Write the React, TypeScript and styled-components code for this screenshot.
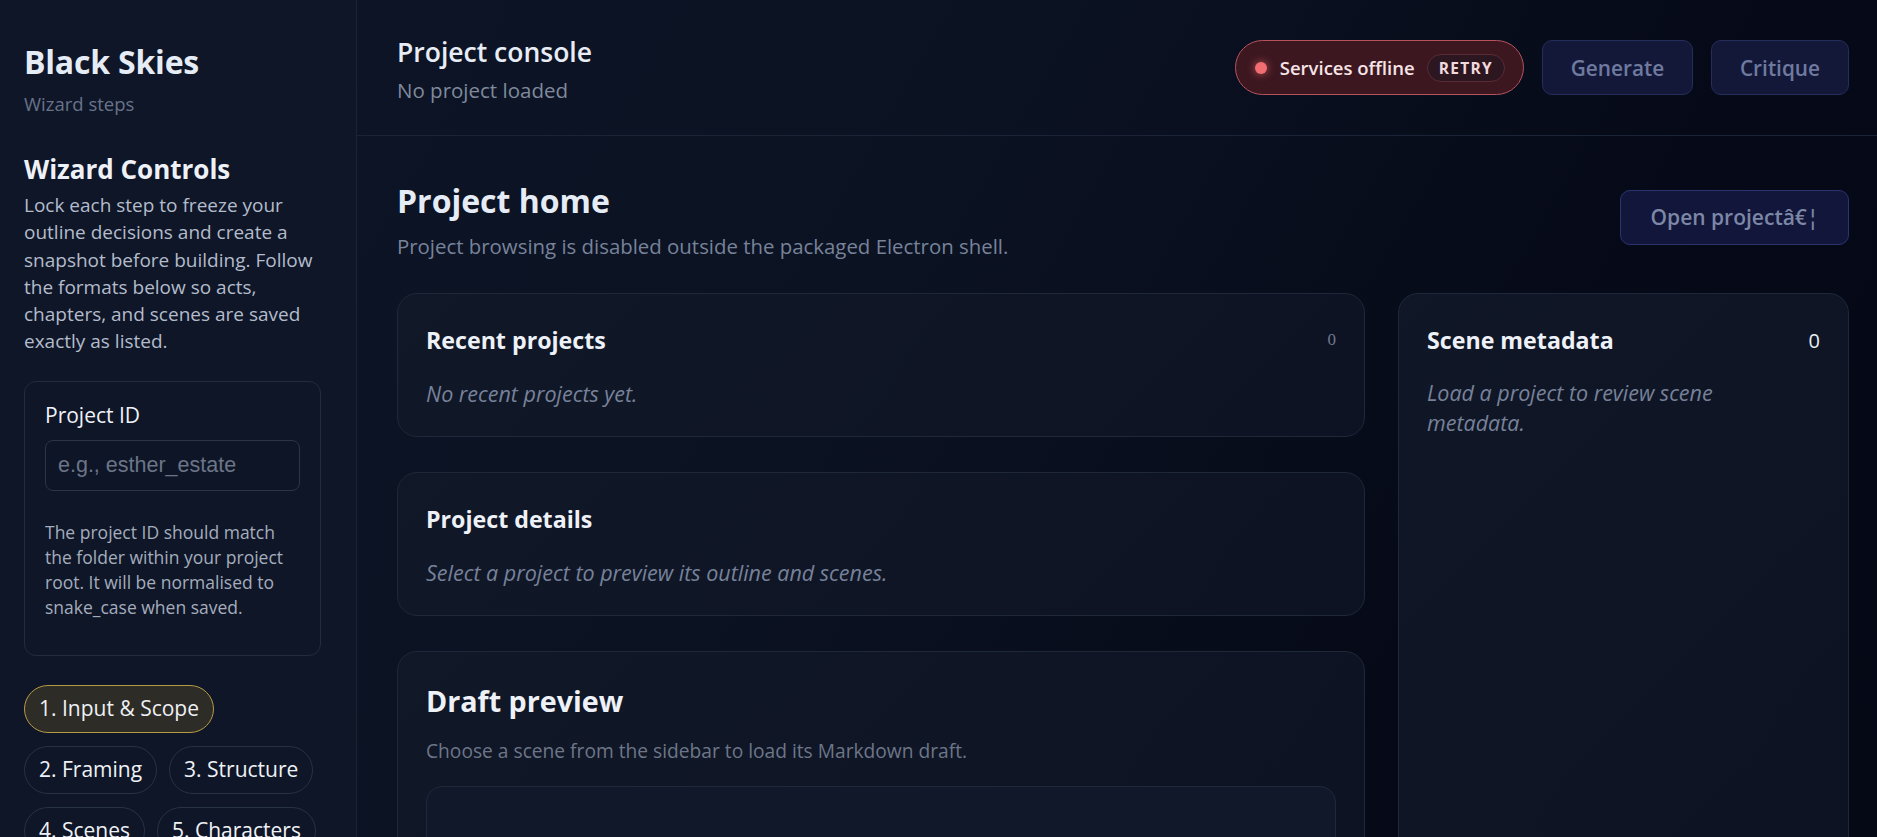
import React from "react";
import styled, { createGlobalStyle } from "styled-components";

const GlobalStyle = createGlobalStyle`
  html, body {
    margin: 0;
    padding: 0;
    height: 100%;
    background: #0a1020;
    font-family: "Open Sans", "Noto Sans", sans-serif;
    color: #e5e9f2;
  }
  #root {
    height: 100%;
  }
  * {
    box-sizing: border-box;
  }
`;

const Shell = styled.div`
  display: flex;
  height: 100vh;
  overflow: hidden;
  background: linear-gradient(120deg, #0e1527 0%, #0b1222 45%, #060a18 75%, #050815 100%);
`;

const Sidebar = styled.aside`
  width: 357px;
  flex-shrink: 0;
  padding: 42px 35px 0 24px;
  background: #0f1628;
  border-right: 1px solid #1b2436;
  display: flex;
  flex-direction: column;
`;

const Brand = styled.h1`
  margin: 0;
  font-size: 32px;
  line-height: 40px;
  font-weight: 700;
  color: #e6ecf5;
  letter-spacing: -0.2px;
`;

const BrandSub = styled.div`
  margin-top: 10px;
  font-size: 18.5px;
  line-height: 24px;
  color: #67738a;
`;

const SectionTitle = styled.h2`
  margin: 36px 0 0;
  font-size: 26px;
  line-height: 34px;
  font-weight: 700;
  color: #eef2f8;
`;

const Intro = styled.p`
  margin: 6px 0 0;
  font-size: 19px;
  line-height: 27.3px;
  color: #b3bccb;
`;

const FieldCard = styled.div`
  margin-top: 25px;
  padding: 20px 20px 35px;
  border: 1px solid #222c3d;
  border-radius: 12px;
`;

const FieldLabel = styled.label`
  display: block;
  font-size: 21px;
  line-height: 26px;
  color: #eef2f8;
`;

const TextInput = styled.input`
  display: block;
  width: 100%;
  height: 51px;
  margin-top: 12px;
  padding: 0 12px;
  background: #0e1527;
  border: 1px solid #2b3547;
  border-radius: 8px;
  font-family: "Liberation Sans", Arial, sans-serif;
  font-size: 21.5px;
  color: #e5e9f2;
  outline: none;
  &::placeholder {
    color: #6b7587;
  }
`;

const FieldHelp = styled.p`
  margin: 29px 0 0;
  font-size: 17.5px;
  line-height: 25px;
  color: #a4adbc;
`;

const Steps = styled.div`
  margin-top: 29px;
  display: flex;
  flex-wrap: wrap;
  gap: 13px 12px;
`;

const StepPill = styled.button<{ $active?: boolean }>`
  height: 48px;
  padding: 0 14px;
  border-radius: 999px;
  border: 1px solid ${(p) => (p.$active ? "#b79a45" : "#283245")};
  background: ${(p) => (p.$active ? "#2d2c26" : "#0f1628")};
  color: #eef1f5;
  font-family: "Open Sans", sans-serif;
  font-size: 21px;
  line-height: 1;
  white-space: nowrap;
  cursor: pointer;
`;

const Main = styled.main`
  flex: 1;
  min-width: 0;
  display: flex;
  flex-direction: column;
`;

const TopBar = styled.header`
  height: 136px;
  flex-shrink: 0;
  padding: 0 28px 0 40px;
  border-bottom: 1px solid #1b2436;
  display: flex;
  align-items: center;
  justify-content: space-between;
`;

const TopHeading = styled.div`
  margin-top: 4px;
`;

const TopTitle = styled.div`
  font-size: 26.5px;
  line-height: 32px;
  font-weight: 600;
  color: #e8edf5;
`;

const TopSub = styled.div`
  margin-top: 9px;
  font-size: 20.5px;
  line-height: 26px;
  color: #7f8a9c;
`;

const TopActions = styled.div`
  display: flex;
  align-items: center;
  gap: 18px;
`;

const StatusPill = styled.div`
  height: 55px;
  display: flex;
  align-items: center;
  padding: 0 18px 0 19px;
  border-radius: 999px;
  border: 1px solid #b5535f;
  background: #3c1720;
  font-size: 18.5px;
  font-weight: 600;
  color: #f6e4e7;
`;

const StatusDot = styled.span`
  width: 12px;
  height: 12px;
  border-radius: 50%;
  background: #f26d72;
  box-shadow: 0 0 8px rgba(248, 113, 113, 0.7);
  margin-right: 13px;
`;

const RetryChip = styled.button`
  margin-left: 12px;
  height: 28px;
  padding: 0 11px;
  border-radius: 999px;
  border: 1px solid #5a2b37;
  background: #2c1620;
  color: #f2d9dd;
  font-family: "Open Sans", sans-serif;
  font-size: 15.5px;
  font-weight: 700;
  letter-spacing: 1.3px;
`;

const GhostButton = styled.button<{ $w: number }>`
  width: ${(p) => p.$w}px;
  height: 55px;
  border-radius: 10px;
  border: 1px solid #252d5a;
  background: #131838;
  color: #6f7aa0;
  font-family: "Open Sans", sans-serif;
  font-size: 20.8px;
  font-weight: 600;
  cursor: default;
`;

const Content = styled.section`
  flex: 1;
  min-height: 0;
  padding: 45px 28px 0 40px;
  display: flex;
  flex-direction: column;
`;

const PageHead = styled.div`
  display: flex;
  align-items: center;
  justify-content: space-between;
`;

const PageTitle = styled.h2`
  margin: 0;
  font-size: 32px;
  line-height: 40px;
  font-weight: 700;
  color: #e6ecf5;
`;

const PageSub = styled.p`
  margin: 12px 0 0;
  font-size: 20.4px;
  line-height: 26px;
  color: #78839a;
`;

const OpenButton = styled.button`
  height: 55px;
  width: 229px;
  margin-top: -6px;
  border-radius: 10px;
  border: 1px solid #2c3470;
  background: #11163a;
  color: #7d87a6;
  font-family: "Open Sans", sans-serif;
  font-size: 21px;
  font-weight: 600;
`;

const Grid = styled.div`
  flex: 1;
  margin-top: 34px;
  display: grid;
  grid-template-columns: minmax(0, 1fr) 451px;
  gap: 33px;
  min-height: 0;
`;

const Column = styled.div`
  display: flex;
  flex-direction: column;
  gap: 35px;
`;

const Card = styled.div<{ $tall?: boolean }>`
  padding: 31px 28px 27px 28px;
  border: 1px solid #1f2838;
  border-radius: 20px;
  background: linear-gradient(135deg, rgba(17, 24, 40, 0.9), rgba(14, 20, 36, 0.85));
  ${(p) => (p.$tall ? "height: calc(100% + 40px);" : "")}
`;

const DraftCard = styled(Card)`
  padding-top: 29px;
`;

const CardHead = styled.div`
  display: flex;
  align-items: center;
  justify-content: space-between;
`;

const CardTitle = styled.h3<{ $big?: boolean }>`
  margin: 0;
  font-size: ${(p) => (p.$big ? "28.7px" : "23.2px")};
  line-height: ${(p) => (p.$big ? "40px" : "30px")};
  font-weight: 700;
  color: #eef2f8;
`;

const Count = styled.span<{ $bright?: boolean }>`
  font-family: ${(p) => (p.$bright ? '"Open Sans", sans-serif' : '"Liberation Serif", serif')};
  font-size: ${(p) => (p.$bright ? "20px" : "17px")};
  color: ${(p) => (p.$bright ? "#e8edf5" : "#6f7a8d")};
`;

const Empty = styled.p<{ $narrow?: boolean }>`
  margin: 24px 0 0;
  font-size: 21.5px;
  line-height: 30px;
  font-style: italic;
  color: #77829a;
  ${(p) => (p.$narrow ? "max-width: 330px; margin-top: 23px;" : "")}
`;

const Hint = styled.p`
  margin: 18px 0 0;
  font-size: 19.2px;
  line-height: 24px;
  color: #6d7688;
`;

const DraftBox = styled.div`
  margin-top: 23px;
  height: 140px;
  border: 1px solid #1f2939;
  border-radius: 16px;
  background: #101829;
`;

const steps = [
  "1. Input & Scope",
  "2. Framing",
  "3. Structure",
  "4. Scenes",
  "5. Characters",
];

export default function App() {
  return (
    <>
      <GlobalStyle />
      <Shell>
        <Sidebar>
          <Brand>Black Skies</Brand>
          <BrandSub>Wizard steps</BrandSub>
          <SectionTitle>Wizard Controls</SectionTitle>
          <Intro>
            Lock each step to freeze your outline decisions and create a snapshot before
            building. Follow the formats below so acts, chapters, and scenes are saved
            exactly as listed.
          </Intro>
          <FieldCard>
            <FieldLabel htmlFor="project-id">Project ID</FieldLabel>
            <TextInput id="project-id" placeholder="e.g., esther_estate" />
            <FieldHelp>
              The project ID should match the folder within your project root. It will be
              normalised to snake_case when saved.
            </FieldHelp>
          </FieldCard>
          <Steps>
            {steps.map((s, i) => (
              <StepPill key={s} $active={i === 0}>
                {s}
              </StepPill>
            ))}
          </Steps>
        </Sidebar>

        <Main>
          <TopBar>
            <TopHeading>
              <TopTitle>Project console</TopTitle>
              <TopSub>No project loaded</TopSub>
            </TopHeading>
            <TopActions>
              <StatusPill>
                <StatusDot />
                Services offline
                <RetryChip>RETRY</RetryChip>
              </StatusPill>
              <GhostButton $w={151}>Generate</GhostButton>
              <GhostButton $w={138}>Critique</GhostButton>
            </TopActions>
          </TopBar>

          <Content>
            <PageHead>
              <div>
                <PageTitle>Project home</PageTitle>
                <PageSub>Project browsing is disabled outside the packaged Electron shell.</PageSub>
              </div>
              <OpenButton>{"Open project\u00e2\u20ac\u00a6"}</OpenButton>
            </PageHead>

            <Grid>
              <Column>
                <Card>
                  <CardHead>
                    <CardTitle>Recent projects</CardTitle>
                    <Count>0</Count>
                  </CardHead>
                  <Empty>No recent projects yet.</Empty>
                </Card>
                <Card>
                  <CardHead>
                    <CardTitle>Project details</CardTitle>
                  </CardHead>
                  <Empty>Select a project to preview its outline and scenes.</Empty>
                </Card>
                <DraftCard>
                  <CardTitle $big>Draft preview</CardTitle>
                  <Hint>Choose a scene from the sidebar to load its Markdown draft.</Hint>
                  <DraftBox />
                </DraftCard>
              </Column>
              <Card $tall>
                <CardHead>
                  <CardTitle>Scene metadata</CardTitle>
                  <Count $bright>0</Count>
                </CardHead>
                <Empty $narrow>Load a project to review scene metadata.</Empty>
              </Card>
            </Grid>
          </Content>
        </Main>
      </Shell>
    </>
  );
}
